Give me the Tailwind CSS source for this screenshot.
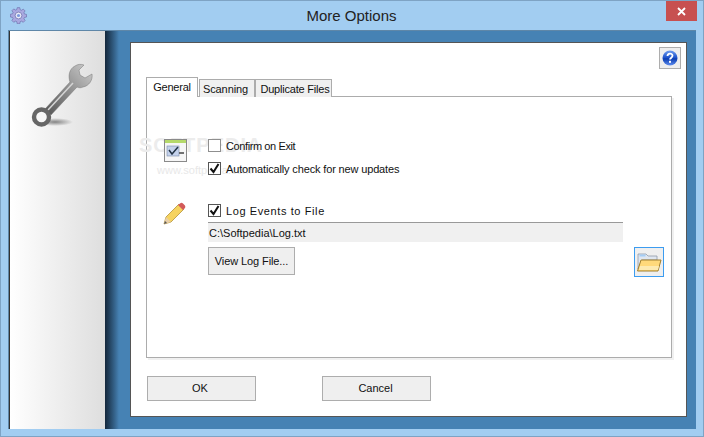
<!DOCTYPE html>
<html><head><meta charset="utf-8"><script src="https://cdn.jsdelivr.net/npm/@tailwindcss/browser@4"></script></head>
<body class="m-0 overflow-hidden">
<div class="w-[704px] h-[437px] flex flex-col bg-[#a2cdf1] border border-[#7ea3c4] font-['Liberation_Sans',sans-serif] text-[#111] text-[11px] overflow-hidden">
  <div class="h-[29px] flex items-center shrink-0 relative">
    <svg class="ml-[9px] w-[17px] h-[17px]" viewBox="0 0 16 16"><path fill="#a9a9e0" stroke="#6a6aa8" stroke-width=".6" d="M6.800.6h2.400l.4 2 1.200.5 1.700-1.100 1.700 1.700-1.100 1.700.5 1.200 2 .4v2.400l-2 .4-.5 1.200 1.100 1.700-1.700 1.700-1.700-1.100-1.200.5-.4 2H6.800l-.4-2-1.200-.5-1.700 1.100-1.700-1.700 1.100-1.700-.5-1.200-2-.4V6.800l2-.4.5-1.200-1.100-1.700 1.700-1.700 1.700 1.100 1.200-.5z"/><circle cx="8" cy="8" r="3.200" fill="#e8ecf8" stroke="#6a6aa8" stroke-width=".7"/><circle cx="8" cy="8" r="1.500" fill="#7d9ade"/></svg>
    <div class="flex-1 text-center text-[15px] text-[#222] pl-[10px] pt-[1px]">More Options</div>
    <div class="w-[31px] h-[20px] mr-[6px] -mt-[9px] bg-[#c75050] flex items-center justify-center text-white">
      <svg class="w-[9px] h-[9px]" viewBox="0 0 9 9"><path d="M1 1l7 7M8 1L1 8" stroke="#fff" stroke-width="1.800"/></svg>
    </div>
  </div>
  <div class="flex-1 flex mx-[7px] mb-[7px] min-h-0 border-t border-l border-[#5f87a8]">
    <div class="w-[96px] shrink-0 bg-gradient-to-r from-white to-[#dedede] border-l border-[#333]">
      <svg class="w-[96px] h-[110px]" viewBox="9 31 96 110">
        <defs>
          <linearGradient id="w" x1="0" y1="1" x2="1" y2="0"><stop offset="0" stop-color="#555"/><stop offset=".5" stop-color="#8e8e8e"/><stop offset="1" stop-color="#cfcfcf"/></linearGradient>
          <radialGradient id="s"><stop offset="0" stop-color="#000" stop-opacity=".45"/><stop offset="1" stop-color="#000" stop-opacity="0"/></radialGradient>
        </defs>
        <ellipse cx="54" cy="122" rx="18" ry="4" fill="url(#s)"/>
        <path fill="url(#w)" stroke="#777" stroke-width=".5" d="M44 109L69 82C67 76 68 69 74 66C77 64 80 64 83 65L78 70L79 75L84 78L91 74C92 80 88 86 82 87C80 88 78 88 76 87L50 115Z"/>
        <path d="M47 110L72 83" stroke="#d5d5d5" stroke-width="1.500"/>
        <circle cx="40.500" cy="117" r="7.500" fill="#f6f6f6" stroke="#666" stroke-width="4.400"/>
      </svg>
    </div>
    <div class="relative flex-1 bg-[#4682b4] pl-[25px] pr-[9px] pt-[11px] pb-[12px] min-w-0">
      <div class="absolute left-0 top-0 bottom-0 w-[14px] bg-gradient-to-r from-[#14283c] to-[#4682b4]"></div>
      <div class="relative h-full bg-white border-t border-l border-[#555] border-r border-b flex flex-col pl-[15px] pr-[15px]">
        <div class="flex justify-end -mr-[10px] pt-[4px] h-[33px] shrink-0">
          <div class="w-[22px] h-[22px] border border-[#adadad] bg-[#eee] flex items-center justify-center">
            <svg class="w-[16px] h-[16px]" viewBox="0 0 16 16"><defs><linearGradient id="h" x1="0" y1="0" x2="0" y2="1"><stop offset="0" stop-color="#6f9df0"/><stop offset=".5" stop-color="#1a4fc9"/><stop offset=".55" stop-color="#0b3db0"/><stop offset="1" stop-color="#5f8df0"/></linearGradient></defs><circle cx="8" cy="8" r="7.500" fill="url(#h)"/><path d="M5.500 6c0-3 5-3.200 5-.2 0 1.800-2.500 2-2.500 3.800" fill="none" stroke="#fff" stroke-width="1.800"/><rect x="7" y="10.800" width="2" height="2" fill="#fff"/></svg>
          </div>
        </div>
        <div class="flex items-end h-[21px] shrink-0 relative z-10">
          <div class="w-[52px] h-[20px] bg-white border border-[#acacac] border-b-0 flex items-center justify-center text-[#111] tracking-[-0.2px] whitespace-nowrap">General</div>
          <div class="w-[56px] h-[18px] ml-px bg-[#f0f0f0] border border-[#acacac] border-b-0 flex items-center justify-center pr-[3px] tracking-[-0.1px] pt-px whitespace-nowrap">Scanning</div>
          <div class="w-[77px] h-[18px] bg-[#f0f0f0] border border-[#acacac] border-b-0 flex items-center justify-center pl-[3px] tracking-[-0.2px] pt-px whitespace-nowrap">Duplicate Files</div>
        </div>
        <div class="relative h-[262px] -mt-px border border-[#acacac] shadow-[2px_2px_0_#f0f0f0] pl-[16px] pt-[41px] shrink-0 w-[526px]">
          <div class="absolute left-[-8px] top-[33px] text-[20px] tracking-[1px] text-[#ececec] font-bold whitespace-nowrap">SOFTPEDIA</div>
          <div class="absolute left-[10px] top-[65px] text-[11px] text-[#e8e8e8] whitespace-nowrap">www.softpedia.com</div>
          <div class="relative flex">
            <svg class="ml-px w-[26px] h-[26px] mt-[1px] shrink-0" viewBox="0 0 26 26"><rect x=".5" y=".5" width="22" height="22" fill="#f6f6f6" stroke="#8a8a8a"/><rect x="1" y="1" width="21" height="3" fill="#b5d96a"/><rect x="3" y="7" width="12" height="10" fill="#c4d2ec" stroke="#7a8aa8" stroke-width=".6"/><path d="M5 11l3 4 6-7" fill="none" stroke="#234" stroke-width="1.500"/><path d="M15 14h5" stroke="#444" stroke-width="1.500"/></svg>
            <div class="ml-[18px] flex flex-col">
              <label class="flex items-center h-[13px] mt-[1px]"><span class="w-[13px] h-[13px] border border-[#8f8f8f] bg-white shrink-0"></span><span class="ml-[5px] pt-px tracking-[-0.4px]">Confirm on Exit</span></label>
              <label class="flex items-center h-[13px] mt-[10px]"><span class="w-[13px] h-[13px] border border-[#555] bg-white shrink-0 flex items-center justify-center"><svg class="w-[11px] h-[11px]" viewBox="0 0 11 11"><path d="M1.500 5.500l3 3.500 5-8" fill="none" stroke="#111" stroke-width="2"/></svg></span><span class="ml-[5px] pt-px tracking-[-0.15px]">Automatically check for new updates</span></label>
            </div>
          </div>
          <div class="relative flex mt-[29px]">
            <svg class="-ml-[2px] w-[26px] h-[26px] -mt-[3px] shrink-0" viewBox="0 0 26 26"><path d="M3 23l2-7L18 3l5 5L10 21z" fill="#f6d360" stroke="#b5933a" stroke-width=".8"/><path d="M5 16l5 5-7 2z" fill="#e8cfa8"/><path d="M3 23l1-3 2 2z" fill="#555"/><path d="M17 4l5 5 2-2c.5-1 .5-2-.5-3L22 2.500c-1-1-2-1-3 0z" fill="#d25a5a"/></svg>
            <div class="ml-[21px] w-[415px] flex flex-col">
              <label class="flex items-center h-[13px]"><span class="w-[13px] h-[13px] border border-[#555] bg-white shrink-0 flex items-center justify-center"><svg class="w-[11px] h-[11px]" viewBox="0 0 11 11"><path d="M1.500 5.500l3 3.500 5-8" fill="none" stroke="#111" stroke-width="2"/></svg></span><span class="ml-[5px] pt-px tracking-[0.6px]">Log Events to File</span></label>
              <div class="h-[20px] mt-[5px] bg-[#f0f0f0] border-t border-[#999] flex items-center pl-[1px] pt-px whitespace-nowrap">C:\Softpedia\Log.txt</div>
              <div class="flex mt-[5px] relative">
                <div class="w-[87px] h-[28px] bg-[#efefef] border border-[#adadad] flex items-center justify-center tracking-[-0.1px]">View Log File...</div>
                <div class="absolute left-[426px] top-0 w-[30px] h-[30px] border border-[#3c9cf0] bg-[#efefef] flex items-center justify-center">
                  <svg class="w-[26px] h-[22px]" viewBox="0 0 26 22"><path d="M2 18V3h8l2 2h9v4H6z" fill="#dfe6f0" stroke="#8f9aa8" stroke-width=".8"/><rect x="3.500" y="3.500" width="6" height="2" fill="#a5cdf5"/><path d="M5 9h20l-3 11H1.500z" fill="#ffd97a" stroke="#a08030"/><path d="M4 15h19l-1 4H3z" fill="#fdeab0"/></svg>
                </div>
              </div>
            </div>
          </div>
        </div>
        <div class="flex mt-[18px] pl-[1px]">
          <div class="w-[109px] h-[25px] bg-[#efefef] border border-[#adadad] flex items-center justify-center pr-[3px]">OK</div>
          <div class="w-[109px] h-[25px] ml-[66px] bg-[#efefef] border border-[#adadad] flex items-center justify-center pr-[2px]">Cancel</div>
        </div>
      </div>
    </div>
  </div>
</div>
</body></html>
